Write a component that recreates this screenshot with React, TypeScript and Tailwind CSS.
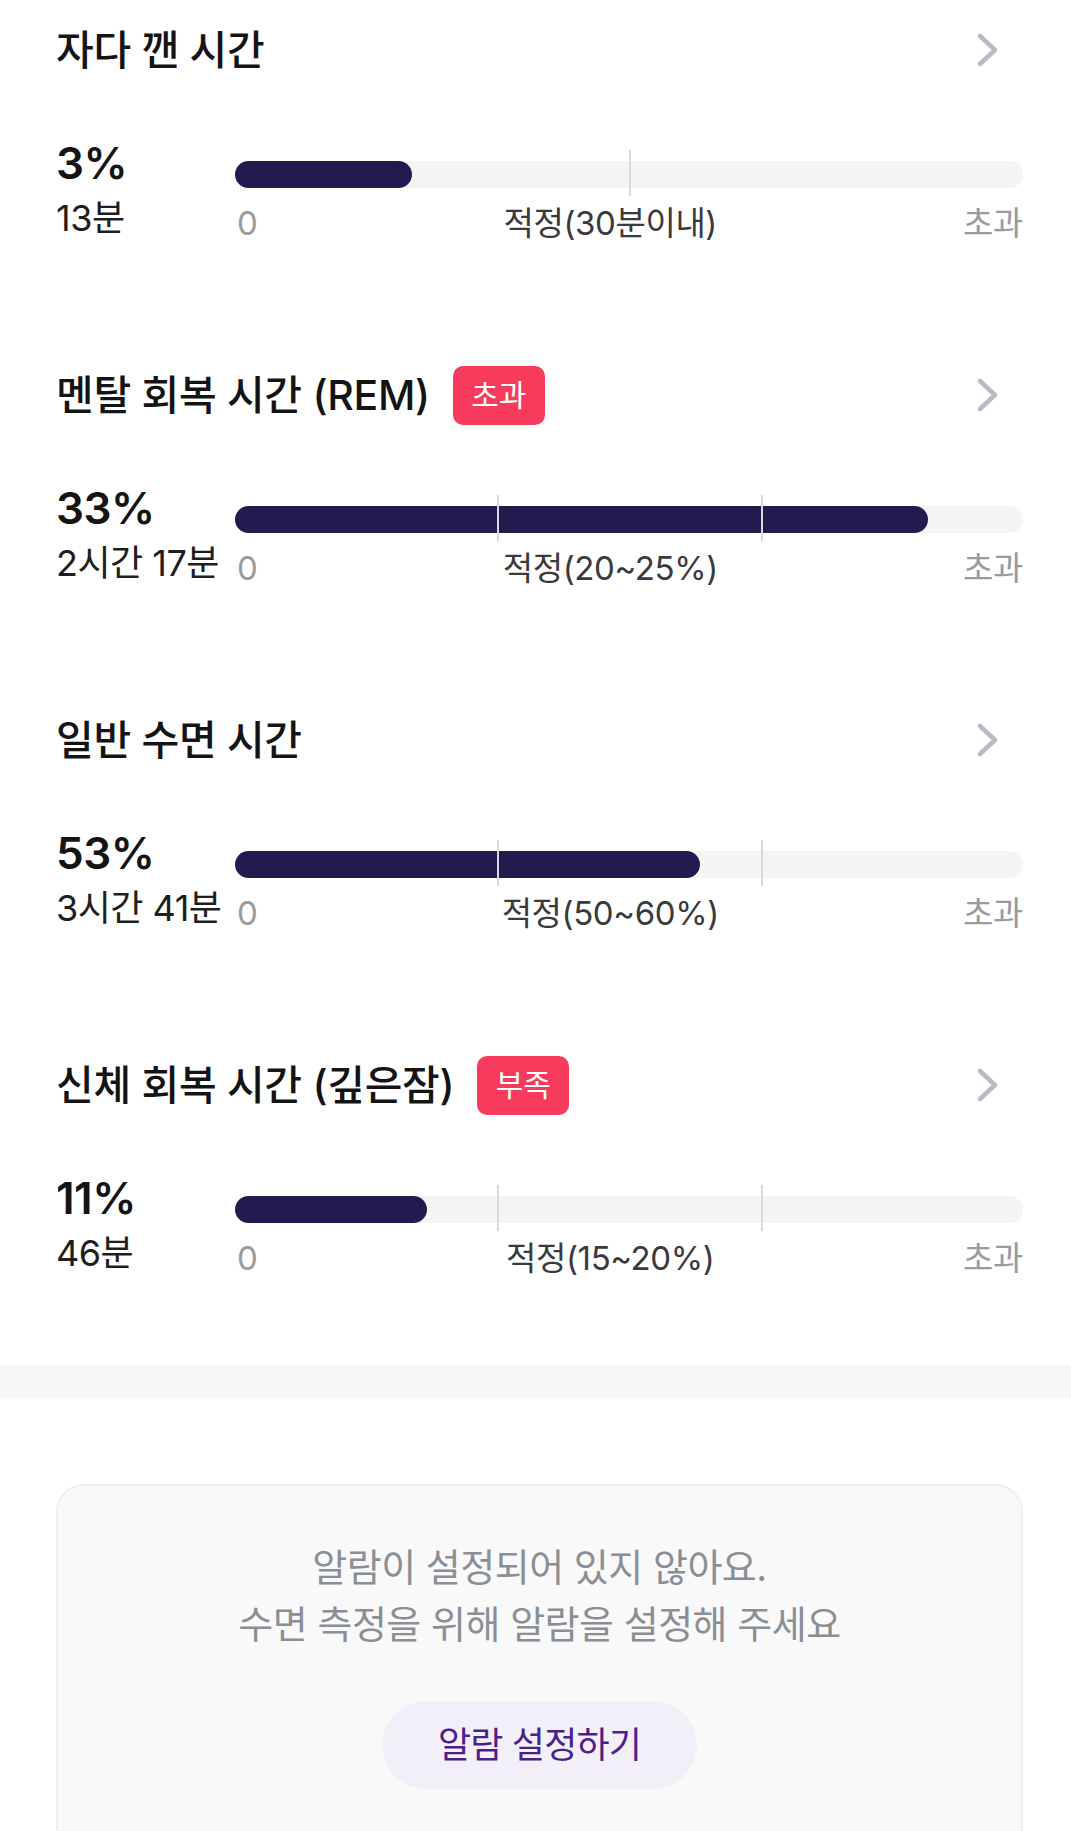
import React from "react";

type Sec = {
  title: string;
  badge?: string;
  pct: string;
  sub: string;
  fill: number;
  ticks: number[];
  label: string;
};

const sections: Sec[] = [
  { title: "자다 깬 시간", pct: "3%", sub: "13분", fill: 22.5, ticks: [50], label: "적정(30분이내)" },
  { title: "멘탈 회복 시간 (REM)", badge: "초과", pct: "33%", sub: "2시간 17분", fill: 88, ticks: [33.3, 66.7], label: "적정(20~25%)" },
  { title: "일반 수면 시간", pct: "53%", sub: "3시간 41분", fill: 59, ticks: [33.3, 66.7], label: "적정(50~60%)" },
  { title: "신체 회복 시간 (깊은잠)", badge: "부족", pct: "11%", sub: "46분", fill: 24.4, ticks: [33.3, 66.7], label: "적정(15~20%)" },
];

const font = { fontFamily: 'Inter, "Noto Sans CJK KR", sans-serif' };

function Chevron() {
  return (
    <svg width="26" height="36" viewBox="0 0 26 36" fill="none">
      <path d="M5 4 L20 18 L5 32" stroke="#b6bbc5" strokeWidth="4.5" strokeLinecap="round" strokeLinejoin="round" />
    </svg>
  );
}

function Section({ s, last }: { s: Sec; last: boolean }) {
  return (
    <div className={last ? "pl-[56px] pr-[48px] pt-[20px] pb-[82px]" : "pl-[56px] pr-[48px] pt-[20px] pb-[97px]"}>
      <div className="flex h-[60px] items-center justify-between">
        <div className="flex items-center">
          <span className="text-[41px] font-medium leading-[60px] tracking-[-0.3px] text-[#141414]">{s.title}</span>
          {s.badge && (
            <span className="ml-[23px] flex h-[59px] w-[92px] items-center justify-center rounded-[10px] bg-[#f73b5c] text-[30px] leading-none text-white">
              {s.badge}
            </span>
          )}
        </div>
        <div className="mr-[22px] flex items-center">
          <Chevron />
        </div>
      </div>
      <div className="mt-[58px] flex">
        <div className="w-[179px] shrink-0">
          <div className="text-[44px] font-semibold leading-[50px] tracking-[-0.5px] text-[#141414]">{s.pct}</div>
          <div className="whitespace-nowrap text-[36px] leading-[60px] tracking-[-0.5px] text-[#1e1e1e]">{s.sub}</div>
        </div>
        <div className="flex-1 pt-[23px]">
          <div className="relative h-[27px] rounded-full bg-[#f4f4f5]">
            <div className="absolute left-0 top-0 h-full rounded-full bg-[#221b4f]" style={{ width: `${s.fill}%` }} />
            {s.ticks.map((t, i) => (
              <div
                key={i}
                className="absolute top-[-11px] bottom-[-8px] w-[2px] bg-[#d9d9dc]"
                style={{ left: `${t}%` }}
              />
            ))}
          </div>
          <div className="mt-[15px] flex justify-between text-[33px] leading-[40px] tracking-[-0.4px]">
            <span className="pl-[2px] text-[#9a9aa0]">0</span>
            <span className="text-[#3a3a3c]">{s.label}</span>
            <span className="text-[#9a9aa0]">초과</span>
          </div>
        </div>
      </div>
    </div>
  );
}

export default function App() {
  return (
    <div className="h-[1831px] w-[1071px] overflow-hidden bg-white" style={font}>
      {sections.map((s, i) => (
        <Section key={i} s={s} last={i === sections.length - 1} />
      ))}
      <div className="h-[33px] bg-[#f6f7f9]" />
      <div className="pl-[56px] pr-[48px] pt-[86px]">
        <div className="flex flex-col items-center rounded-[28px] border-2 border-[#efeff1] bg-[#f9f9fa] pt-[53px] pb-[80px]">
          <div className="text-center text-[38px] leading-[57px] tracking-[-0.5px] text-[#8b8e94]">
            <div>알람이 설정되어 있지 않아요.</div>
            <div>수면 측정을 위해 알람을 설정해 주세요</div>
          </div>
          <button className="mt-[48px] flex h-[88px] w-[315px] items-center justify-center rounded-full bg-[#f3eff9] text-[36px] tracking-[-0.8px] text-[#4b1f8c]">
            알람 설정하기
          </button>
        </div>
      </div>
    </div>
  );
}
